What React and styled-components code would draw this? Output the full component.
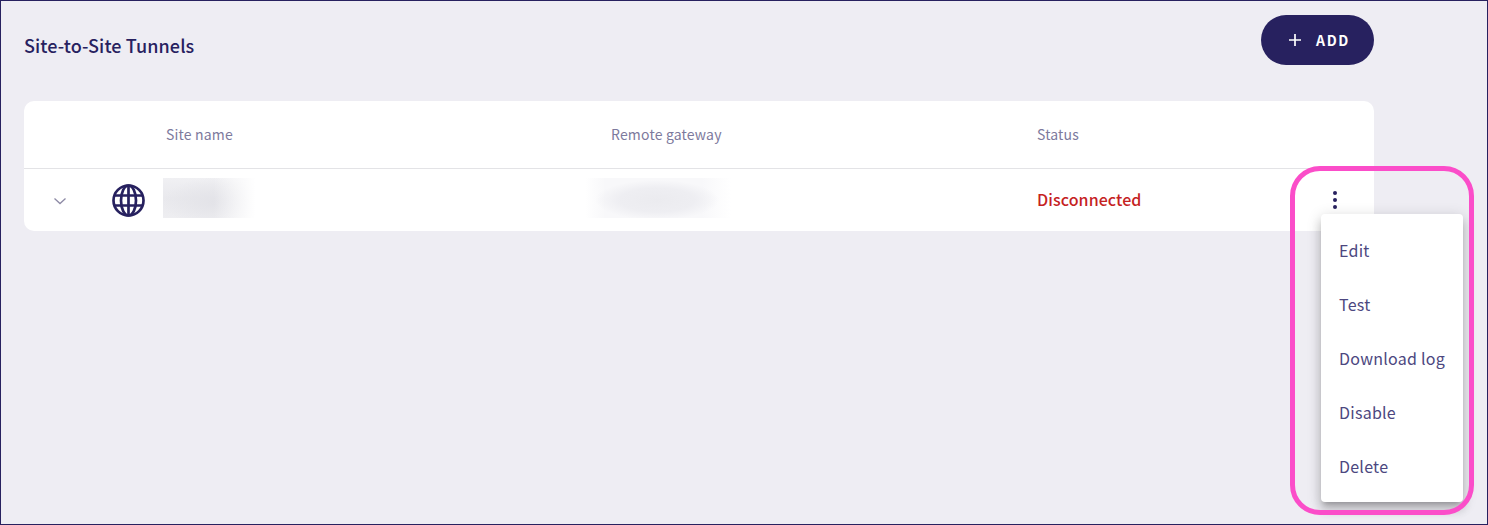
import React from "react";
import styled, { createGlobalStyle } from "styled-components";

const Global = createGlobalStyle`
  html, body { margin: 0; padding: 0; }
  body { font-family: "Noto Sans CJK JP", "Noto Sans", sans-serif; background: #eeedf3; }
`;

const Page = styled.div`
  position: relative;
  box-sizing: border-box;
  width: 1488px;
  height: 525px;
  border: 1px solid #27215f;
  padding: 14px 113px 0 23px;
  background: #eeedf3;
  overflow: hidden;
`;

const TopBar = styled.div`
  display: flex;
  align-items: center;
  justify-content: space-between;
  height: 50px;
  margin-bottom: 36px;
`;

const Title = styled.h1`
  margin: 10px 0 0;
  font-size: 18px;
  line-height: 24px;
  font-weight: 500;
  letter-spacing: 0.1px;
  color: #27215f;
`;

const AddButton = styled.button`
  display: flex;
  align-items: center;
  gap: 14px;
  width: 113px;
  height: 50px;
  padding: 0 0 0 27px;
  border: 0;
  border-radius: 25px;
  background: #27215f;
  color: #fff;
  font-family: inherit;
  font-size: 14px;
  font-weight: 700;
  letter-spacing: 1.7px;
`;

const Card = styled.div`
  background: #fff;
  border-radius: 10px;
  height: 130px;
`;

const Columns = styled.div`
  display: grid;
  grid-template-columns: 139px 448px 426px 1fr;
  align-items: center;
`;

const HeaderRow = styled(Columns)`
  height: 65px;
  padding-bottom: 2px;
  border-bottom: 1px solid #e3e3e6;
  color: #7d7a9d;
  font-size: 14px;
  letter-spacing: 0.18px;
`;

const SiteHeading = styled.div`
  padding-left: 3px;
`;

const DataRow = styled(Columns)`
  height: 62px;
`;

const Leading = styled.div`
  display: flex;
  align-items: center;
  padding-left: 29px;
  gap: 45px;
`;

const ChevronWrap = styled.span`
  display: flex;
  margin-top: 2px;
`;

const Blur = styled.div`
  height: 40px;
  width: ${p => p.$w}px;
  margin: 0 0 4px ${p => p.$left}px;
  background: ${p => p.$bg};
`;

const StatusCell = styled.div`
  display: flex;
  align-items: center;
  justify-content: space-between;
`;

const Status = styled.div`
  color: #c5221f;
  font-size: 16px;
  font-weight: 500;
  line-height: 22px;
  letter-spacing: 0.08px;
  margin-bottom: 2px;
`;

const Kebab = styled.div`
  display: flex;
  padding-right: 36px;
`;

const Menu = styled.ul`
  position: absolute;
  left: 1320px;
  top: 213px;
  width: 142px;
  height: 288px;
  margin: 0;
  padding: 9px 0;
  box-sizing: border-box;
  list-style: none;
  background: #fff;
  border-radius: 4px;
  box-shadow: 0 5px 5px -3px rgba(0,0,0,.2), 0 8px 10px 1px rgba(0,0,0,.14), 0 3px 14px 2px rgba(0,0,0,.12);
`;

const MenuItem = styled.li`
  display: flex;
  align-items: center;
  height: 54px;
  padding-left: 18px;
  font-size: 16px;
  letter-spacing: 0.25px;
  color: #4c4780;
`;

const Highlight = styled.div`
  position: absolute;
  left: 1289px;
  top: 165px;
  width: 184px;
  height: 349px;
  box-sizing: border-box;
  border: 5px solid #fb4dc9;
  border-radius: 30px;
  pointer-events: none;
`;

const Globe = () => (
  <svg width="33" height="33" viewBox="0 0 33 33" fill="none" stroke="#27215f" strokeWidth="2.7">
    <circle cx="16.5" cy="16.5" r="15" />
    <ellipse cx="16.5" cy="16.5" rx="7.5" ry="15" />
    <path d="M16.5 1.5v30M2.5 11.5h28M2.5 21.5h28" />
  </svg>
);

const Chevron = () => (
  <svg width="14" height="8" viewBox="0 0 14 8" fill="none" stroke="#8d8aa5" strokeWidth="1.3">
    <path d="M1.5 1.5 7 6.5l5.5-5" />
  </svg>
);

const Dots = () => (
  <svg width="6" height="20" viewBox="0 0 6 20" fill="#27215f">
    <circle cx="3" cy="3" r="2" />
    <circle cx="3" cy="10" r="2" />
    <circle cx="3" cy="17" r="2" />
  </svg>
);

const Plus = () => (
  <svg width="14" height="14" viewBox="0 0 14 14" stroke="#fff" strokeWidth="1.7">
    <path d="M7 1v12M1 7h12" />
  </svg>
);

const siteBlur = "radial-gradient(ellipse 50px 24px at 50px 24px, #e3e3e8 0%, rgba(230,230,235,0) 100%), linear-gradient(180deg, #f0f0f3 0%, #e9e9ed 50%, #eeeef1 100%)";
const siteFade = "linear-gradient(90deg, rgba(255,255,255,0) 0%, rgba(255,255,255,0) 55%, #fff 100%)";
const gatewayBlur = "radial-gradient(ellipse 62px 20px at 72px 22px, #ebebef 0%, #eeeef2 60%, rgba(238,238,242,0) 100%), linear-gradient(90deg, #fff 0%, #f8f8fa 14%, #f8f8fa 80%, #fff 100%)";

const items = ["Edit", "Test", "Download log", "Disable", "Delete"];

export default function App() {
  return (
    <Page>
      <Global />
      <TopBar>
        <Title>Site-to-Site Tunnels</Title>
        <AddButton><Plus />ADD</AddButton>
      </TopBar>
      <Card>
        <HeaderRow>
          <div />
          <SiteHeading>Site name</SiteHeading>
          <div>Remote gateway</div>
          <div>Status</div>
        </HeaderRow>
        <DataRow>
          <Leading><ChevronWrap><Chevron /></ChevronWrap><Globe /></Leading>
          <Blur $w={92} $left={0} $bg={`${siteFade}, ${siteBlur}`} />
          <Blur $w={146} $left={-26} $bg={gatewayBlur} />
          <StatusCell>
            <Status>Disconnected</Status>
            <Kebab><Dots /></Kebab>
          </StatusCell>
        </DataRow>
      </Card>
      <Menu>
        {items.map(i => <MenuItem key={i}>{i}</MenuItem>)}
      </Menu>
      <Highlight />
    </Page>
  );
}
